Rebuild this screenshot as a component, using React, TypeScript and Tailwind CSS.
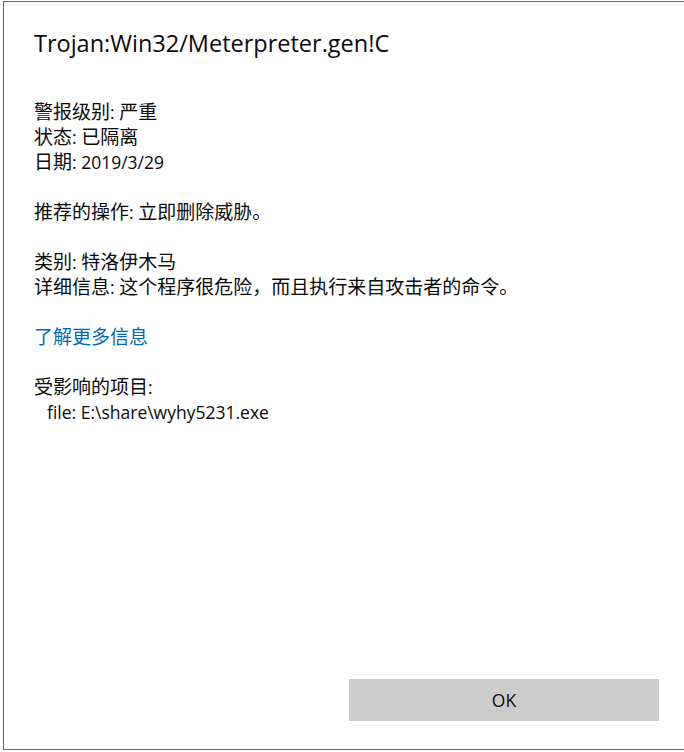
const fontStack = '"Segoe UI", "Open Sans", "Noto Sans CJK SC", sans-serif';

// CJK runs render a bit larger than Latin in the original dialog
const Mixed = ({ text }: { text: string }) => (
  <>
    {text.split(/([\u3000-\u9fff\uff00-\uffef]+)/).map((part, i) =>
      /[\u3000-\u9fff\uff00-\uffef]/.test(part) ? (
        <span key={i} className="text-[19px]">
          {part}
        </span>
      ) : (
        <span key={i}>{part}</span>
      )
    )}
  </>
);

const Line = ({ text, className = '' }: { text?: string; className?: string }) => (
  <div className={`h-[25px] leading-[25px] whitespace-nowrap ${className}`}>
    {text ? <Mixed text={text} /> : null}
  </div>
);

export default function App() {
  return (
    <div
      className="w-[684px] h-[752px] bg-white overflow-hidden"
      style={{ fontFamily: fontStack }}
    >
      <div className="ml-[3px] mt-[1px] h-[749px] flex flex-col border-t border-l border-b border-[#2b79b8] bg-white">
        <div className="pl-[30px] pt-[24px] text-[23.5px] leading-[34px] text-[#0a0a0a] whitespace-nowrap">
          Trojan:Win32/Meterpreter.gen!C
        </div>

        <div className="pl-[30px] pt-[40px] text-[17.5px] text-[#0a0a0a]">
          <Line text="警报级别: 严重" />
          <Line text="状态: 已隔离" />
          <Line text="日期: 2019/3/29" />
          <Line />
          <Line text="推荐的操作: 立即删除威胁。" />
          <Line />
          <Line text="类别: 特洛伊木马" />
          <Line text="详细信息: 这个程序很危险，而且执行来自攻击者的命令。" />
          <Line />
          <Line text="了解更多信息" className="text-[#0067b8]" />
          <Line />
          <Line text="受影响的项目:" />
          <Line text="file: E:\share\wyhy5231.exe" className="pl-[13px]" />
        </div>

        <div className="mt-auto flex justify-end pr-[25px] pb-[28px]">
          <button className="w-[310px] h-[42px] bg-[#cccccc] text-[17.5px] text-[#0a0a0a]">
            OK
          </button>
        </div>
      </div>
    </div>
  );
}
